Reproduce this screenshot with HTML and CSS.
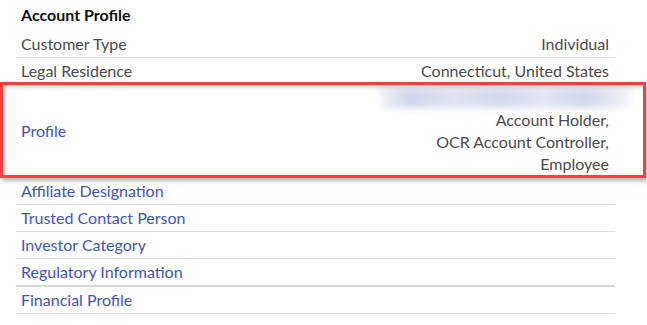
FILE: index.html
```html
<!DOCTYPE html>
<html>
<head>
<meta charset="utf-8">
<link rel="stylesheet" href="styles.css">
</head>
<body>
<div class="panel">
  <div class="title">Account Profile</div>
  <div class="row">
    <span class="label">Customer Type</span>
    <span class="value">Individual</span>
  </div>
  <div class="row">
    <span class="label">Legal Residence</span>
    <span class="value">Connecticut, United States</span>
  </div>
  <div class="row row-profile">
    <a class="link">Profile</a>
    <div class="value-stack">
      <div class="redacted"></div>
      <div>Account Holder,</div>
      <div>OCR Account Controller,</div>
      <div>Employee</div>
    </div>
    <div class="highlight"></div>
  </div>
  <div class="row"><a class="link">Affiliate Designation</a></div>
  <div class="row"><a class="link">Trusted Contact Person</a></div>
  <div class="row"><a class="link">Investor Category</a></div>
  <div class="row row-thick"><a class="link">Regulatory Information</a></div>
  <div class="row"><a class="link">Financial Profile</a></div>
</div>
</body>
</html>
```

FILE: styles.css
```css
html, body {
  margin: 0;
  padding: 0;
  background: #ffffff;
}
body {
  font-family: "Lato", "Open Sans", sans-serif;
  font-size: 16px;
  color: #4a4a4a;
}
.panel {
  margin-left: 16px;
  width: 599px;
}
.title {
  height: 29px;
  line-height: 29px;
  padding: 0 0 2px 5px;
  font-weight: bold;
  color: #111111;
}
.row {
  display: flex;
  justify-content: space-between;
  align-items: center;
  height: 24px;
  padding: 0 6px 2px 5px;
  border-bottom: 1px solid #dedede;
}
.row-thick {
  border-bottom: 2px solid #d8d8d8;
}
.label { color: #4a4a4a; }
.value { color: #4a4a4a; }
.link {
  color: #3d54c2;
  cursor: pointer;
}
.row-profile {
  position: relative;
  height: 90px;
  align-items: center;
}
.value-stack {
  display: flex;
  flex-direction: column;
  align-items: flex-end;
  line-height: 22px;
  padding-top: 2px;
}
.redacted {
  width: 250px;
  height: 20px;
  margin: 1px -21px 1px 0;
  background: linear-gradient(90deg, #f1f2f8 0%, #cfd5ec 12%, #e0e4f2 30%, #d2d8ee 48%, #e3e6f3 65%, #d0d6ed 82%, #f3f4f9 100%);
  filter: blur(3px);
}
.highlight {
  position: absolute;
  left: -16px;
  right: -31px;
  top: -3px;
  bottom: -1px;
  border: 3px solid #f43f42;
  box-shadow: 2px 3px 4px rgba(0, 0, 0, 0.3), inset 2px 3px 4px rgba(0, 0, 0, 0.15);
  pointer-events: none;
}
```
